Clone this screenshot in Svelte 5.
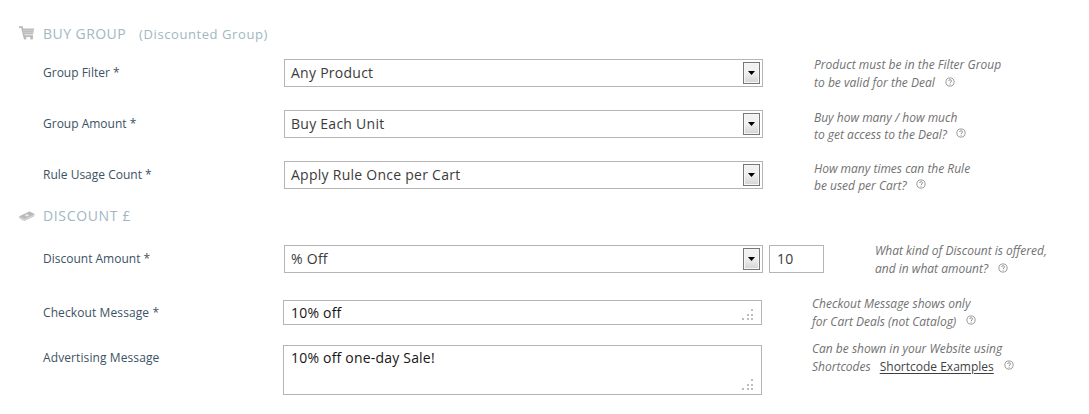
<script>
  const buyRows = [
    { label: 'Group Filter *', value: 'Any Product', help: ['Product must be in the Filter Group', 'to be valid for the Deal'], cls: 'first' },
    { label: 'Group Amount *', value: 'Buy Each Unit', help: ['Buy how many / how much', 'to get access to the Deal?'], cls: 'tight' },
    { label: 'Rule Usage Count *', value: 'Apply Rule Once per Cart', help: ['How many times can the Rule', 'be used per Cart?'], cls: 'tight' }
  ];
</script>

{#snippet question()}
  <svg class="question" width="10" height="10" viewBox="0 0 10 10" fill="none">
    <circle cx="5" cy="5" r="4.1" stroke="#8e8e8e" stroke-width=".9" />
    <path d="M3.6 4C3.6 2.3 6.5 2.3 6.5 3.9C6.5 5 5.1 4.9 5.1 6.1M5.1 6.8V7.7" stroke="#858585" stroke-width=".9" />
  </svg>
{/snippet}

{#snippet select(value)}
  <div class="select">
    <span>{value}</span>
    <div class="arrow"><svg width="7" height="4" viewBox="0 0 7 4"><path d="M0 0H7L3.5 4Z" fill="#000" /></svg></div>
  </div>
{/snippet}

{#snippet grip()}
  <svg class="grip" width="12" height="12" viewBox="0 0 12 12" fill="#bdbdbd">
    <path d="M9 0h2v2h-2zM5 5h2v2H5zM9 5h2v2h-2zM0 9h2v2H0zM5 9h2v2H5zM9 9h2v2H9z" />
  </svg>
{/snippet}

<main>
  <header class="buy">
    <svg width="16" height="14" viewBox="0 0 16 14" fill="none">
      <path d="M0 1.2H3L5 10.2H14" stroke="#b9b9b9" stroke-width="1.8" />
      <path d="M3.5 2.5H15.2L14 8.5H4.7Z" fill="#bdbdbd" />
      <path d="M4 4.6H15M4.5 6.6H14.5" stroke="#d6d6d6" stroke-width=".6" />
      <circle cx="6" cy="12" r="1.5" fill="#b9b9b9" /><circle cx="12.6" cy="12" r="1.5" fill="#b9b9b9" />
    </svg>
    <h2>BUY GROUP</h2><small>(Discounted Group)</small>
  </header>

  {#each buyRows as row}
    <div class="row">
      <div class="label">{row.label}</div>
      {@render select(row.value)}
      <p class="help {row.cls}">{row.help[0]}<br />{row.help[1]}{@render question()}</p>
    </div>
  {/each}

  <header class="discount">
    <svg width="16" height="14" viewBox="0 0 16 14">
      <path d="M0 7.5L10.5 2.5L15.5 5V7L5.5 12L0 9Z" fill="#d6d6d6" />
      <path d="M0 7.5L10.5 2.5L15.5 5L5.5 10Z" fill="#b9b9b9" />
      <ellipse cx="8" cy="6.3" rx="2" ry="1.1" fill="#e8e8e8" />
      <path d="M1 9.5L5.5 11.5L15 6.7" fill="none" stroke="#c2c2c2" stroke-width=".6" />
    </svg>
    <h2>DISCOUNT £</h2>
  </header>

  <div class="row amount">
    <div class="label">Discount Amount *</div>
    {@render select('% Off')}
    <div class="number">10</div>
    <p class="help">What kind of Discount is offered,<br />and in what amount?{@render question()}</p>
  </div>
  <div class="row message">
    <div class="label">Checkout Message *</div>
    <div class="area short">10% off{@render grip()}</div>
    <p class="help">Checkout Message shows only<br />for Cart Deals (not Catalog){@render question()}</p>
  </div>
  <div class="row message advert">
    <div class="label">Advertising Message</div>
    <div class="area">10% off one-day Sale!{@render grip()}</div>
    <p class="help">Can be shown in your Website using<br />Shortcodes<a href="#examples">Shortcode Examples</a>{@render question()}</p>
  </div>
</main>

<style>
  :global(body) { background: #fff; }
  main { box-sizing: border-box; width: 1089px; height: 414px; padding-top: 20px; overflow: hidden; font-family: "Open Sans", sans-serif; white-space: nowrap; }
  header { display: flex; align-items: center; height: 28px; padding-left: 19px; color: #a1b7c2; }
  header svg { margin: -3px 8px 0 0; }
  header.buy { margin-bottom: 11px; }
  header.discount { height: 28px; margin: -10px 0 15px; }
  header.discount svg { margin-top: 0; }
  h2 { margin: 0; padding-bottom: 2px; font-size: 14px; font-weight: 400; letter-spacing: .45px; }
  .discount h2 { letter-spacing: .65px; }
  small { margin-left: 13px; font-size: 13px; letter-spacing: .58px; }
  .row { display: flex; align-items: flex-start; height: 51px; padding-left: 43px; }
  .label { width: 241px; line-height: 28px; font-size: 12px; color: #3c5264; }
  .select, .number, .area { box-sizing: border-box; border: 1px solid #b5b5b5; font-size: 14px; color: #3b3b3b; }
  .select { display: flex; justify-content: space-between; align-items: center; width: 479px; height: 28px; padding: 0 2px 0 6px; line-height: 26px; letter-spacing: .26px; }
  .arrow { box-sizing: border-box; width: 17px; height: 22px; border: 1px solid #777; background: linear-gradient(#f1f1f1 45%, #d4d4d4); box-shadow: inset 0 0 0 1px #f6f6f6; display: grid; place-items: center; }
  .help { margin: -3px 0 0 51px; font-size: 12px; line-height: 18px; font-style: italic; color: #717171; }
  .help.first { letter-spacing: .02px; }
  .help.tight { line-height: 17px; margin-top: -1px; }
  .question { margin-left: 10px; vertical-align: 0; }
  .help.tight .question { margin-left: 9px; vertical-align: 1px; }
  .amount { height: 55px; }
  .amount .label { line-height: 27px; }
  .number { width: 55px; height: 28px; margin-left: 6px; padding-left: 7px; line-height: 26px; letter-spacing: .3px; }
  .amount .help { margin-left: 51px; }
  .message { height: 45px; }
  .message .label { width: 240px; line-height: 26px; letter-spacing: .1px; }
  .area { position: relative; width: 479px; height: 50px; padding-left: 7px; line-height: 24px; color: #161616; letter-spacing: .2px; }
  .area.short { height: 25px; }
  .grip { position: absolute; right: 7px; bottom: 3px; }
  .message .help { margin-left: 50px; margin-top: -5px; }
  .message .question { vertical-align: 1px; }
  .advert .question { margin-left: 9px; }
  a { margin-left: 9px; margin-right: 1px; color: #3f3f3f; font-style: normal; text-decoration: underline; text-underline-offset: 2px; }
</style>
